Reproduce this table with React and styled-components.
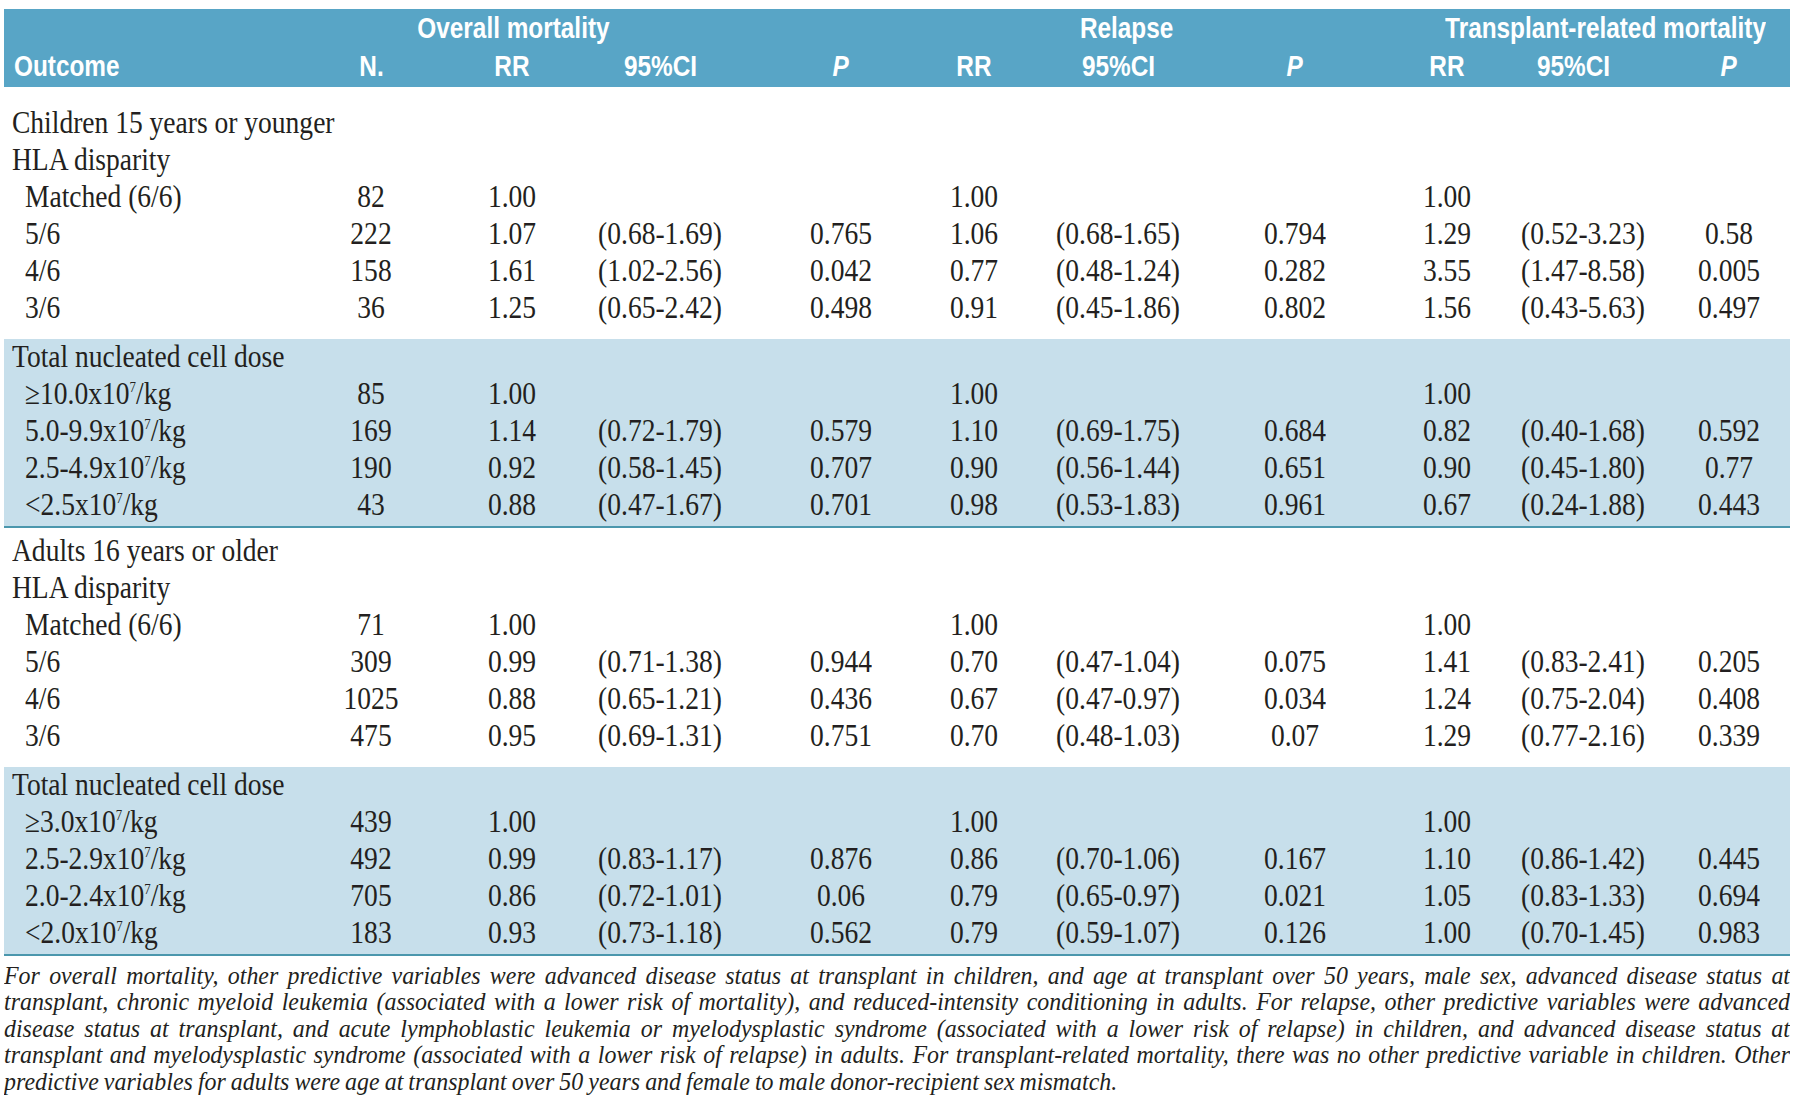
import React from 'react'
import styled, { createGlobalStyle } from 'styled-components'

const GlobalStyle = createGlobalStyle`
  html, body {
    margin: 0;
    padding: 0;
    background: #ffffff;
  }
  body {
    font-family: "Liberation Serif", "Times New Roman", serif;
    color: #231f20;
  }
`;

// track widths follow the midpoints between the column centres of the print layout,
// shift nudges each column's text back onto its printed centre
const COLS = [
    { w: 296.5 },
    { w: 141, shift: 0 },
    { w: 144.5, shift: -2 },
    { w: 164.5, shift: -8 },
    { w: 157, shift: 12 },
    { w: 138.5, shift: -3 },
    { w: 160.5, shift: -8 },
    { w: 164.5, shift: 6 },
    { w: 139.5, shift: 6 },
    { w: 140.5, shift: -7 },
    { w: 139, shift: 8 },
]

const TEMPLATE = COLS.map((c) => `${c.w}px`).join(' ')

const FOOT_SCALE = 0.92

const Page = styled.div`
width: 1786px;
padding: 9px 0 0 4px;
`;

const Header = styled.div`
background-color: #58a5c6;
padding: 0 0 2px;
color: #ffffff;
font-family: "Liberation Sans", Arial, sans-serif;
font-weight: 700;
font-size: 29px;
`;

const HeadRow = styled.div`
display: grid;
grid-template-columns: ${TEMPLATE};
height: 38px;
line-height: 38px;
`;

const GroupTitle = styled.div`
grid-column: ${(p) => p.$col} / span ${(p) => p.$span || 1};
grid-row: 1;
justify-self: ${(p) => (p.$right ? 'end' : 'center')};
padding-right: ${(p) => (p.$right ? '24px' : '0')};
white-space: nowrap;
`;

const HeadLabel = styled.div`
padding-left: 10px;
white-space: nowrap;
`;

const HeadCell = styled.div`
text-align: center;
white-space: nowrap;
font-style: ${(p) => (p.$italic ? 'italic' : 'normal')};
padding-left: ${(p) => Math.max(0, p.$shift * 2)}px;
padding-right: ${(p) => Math.max(0, -p.$shift * 2)}px;
`;

// headings are set in a condensed grotesque: narrow the sans on the x axis
const HeadText = styled.span`
display: inline-block;
transform: scaleX(0.84);
transform-origin: ${(p) => p.$origin || 'center'};
`;

const Section = styled.div`
background-color: ${(p) => (p.$band ? '#c7dfeb' : 'transparent')};
padding: ${(p) => (p.$band ? '0 0 2px' : p.$first ? '18px 0 12px' : '5px 0 12px')};
border-bottom: ${(p) => (p.$band ? '2px solid #4b97ad' : 'none')};
`;

const Row = styled.div`
display: grid;
grid-template-columns: ${TEMPLATE};
height: 37px;
line-height: 34px;
font-size: 32px;
`;

const LabelCell = styled.div`
padding-left: ${(p) => (p.$sub ? '21px' : '8px')};
white-space: nowrap;
`;

const Cell = styled.div`
text-align: center;
white-space: nowrap;
padding-left: ${(p) => Math.max(0, p.$shift * 2)}px;
padding-right: ${(p) => Math.max(0, -p.$shift * 2)}px;
`;

// the print face is a condensed Century, so the serif is narrowed on the x axis
const CenterText = styled.span`
display: inline-block;
transform: scaleX(0.86);
transform-origin: center;
`;

const LeftText = styled(CenterText)`
transform-origin: left center;
`;

const Sup = styled.sup`
font-size: 15px;
line-height: 0;
vertical-align: 0;
position: relative;
top: -12px;
`;

const Footnote = styled.div`
width: 1786px;
overflow: hidden;
padding-top: 7px;
`;

// condensed italic: set wider, then narrowed back onto the table width
const FootText = styled.div`
width: ${1786 / FOOT_SCALE}px;
transform: scaleX(${FOOT_SCALE});
transform-origin: left top;
font-style: italic;
font-size: 26px;
word-spacing: -1px;
line-height: 26.4px;
`;

const FootLine = styled.div`
white-space: nowrap;
text-align: justify;
text-align-last: ${(p) => (p.$last ? 'left' : 'justify')};
`;

const Dose = ({ pre, post = '/kg' }) => (
    <>
        {pre}
        <Sup>7</Sup>
        {post}
    </>
)

const SECTIONS = [
    {
        band: false,
        first: true,
        rows: [
            { label: 'Children 15 years or younger' },
            { label: 'HLA disparity' },
            { label: 'Matched (6/6)', sub: true, v: ['82', '1.00', '', '', '1.00', '', '', '1.00', '', ''] },
            { label: '5/6', sub: true, v: ['222', '1.07', '(0.68-1.69)', '0.765', '1.06', '(0.68-1.65)', '0.794', '1.29', '(0.52-3.23)', '0.58'] },
            { label: '4/6', sub: true, v: ['158', '1.61', '(1.02-2.56)', '0.042', '0.77', '(0.48-1.24)', '0.282', '3.55', '(1.47-8.58)', '0.005'] },
            { label: '3/6', sub: true, v: ['36', '1.25', '(0.65-2.42)', '0.498', '0.91', '(0.45-1.86)', '0.802', '1.56', '(0.43-5.63)', '0.497'] },
        ],
    },
    {
        band: true,
        rows: [
            { label: 'Total nucleated cell dose' },
            { dose: '≥10.0x10', sub: true, v: ['85', '1.00', '', '', '1.00', '', '', '1.00', '', ''] },
            { dose: '5.0-9.9x10', sub: true, v: ['169', '1.14', '(0.72-1.79)', '0.579', '1.10', '(0.69-1.75)', '0.684', '0.82', '(0.40-1.68)', '0.592'] },
            { dose: '2.5-4.9x10', sub: true, v: ['190', '0.92', '(0.58-1.45)', '0.707', '0.90', '(0.56-1.44)', '0.651', '0.90', '(0.45-1.80)', '0.77'] },
            { dose: '<2.5x10', sub: true, v: ['43', '0.88', '(0.47-1.67)', '0.701', '0.98', '(0.53-1.83)', '0.961', '0.67', '(0.24-1.88)', '0.443'] },
        ],
    },
    {
        band: false,
        rows: [
            { label: 'Adults 16 years or older' },
            { label: 'HLA disparity' },
            { label: 'Matched (6/6)', sub: true, v: ['71', '1.00', '', '', '1.00', '', '', '1.00', '', ''] },
            { label: '5/6', sub: true, v: ['309', '0.99', '(0.71-1.38)', '0.944', '0.70', '(0.47-1.04)', '0.075', '1.41', '(0.83-2.41)', '0.205'] },
            { label: '4/6', sub: true, v: ['1025', '0.88', '(0.65-1.21)', '0.436', '0.67', '(0.47-0.97)', '0.034', '1.24', '(0.75-2.04)', '0.408'] },
            { label: '3/6', sub: true, v: ['475', '0.95', '(0.69-1.31)', '0.751', '0.70', '(0.48-1.03)', '0.07', '1.29', '(0.77-2.16)', '0.339'] },
        ],
    },
    {
        band: true,
        rows: [
            { label: 'Total nucleated cell dose' },
            { dose: '≥3.0x10', sub: true, v: ['439', '1.00', '', '', '1.00', '', '', '1.00', '', ''] },
            { dose: '2.5-2.9x10', sub: true, v: ['492', '0.99', '(0.83-1.17)', '0.876', '0.86', '(0.70-1.06)', '0.167', '1.10', '(0.86-1.42)', '0.445'] },
            { dose: '2.0-2.4x10', sub: true, v: ['705', '0.86', '(0.72-1.01)', '0.06', '0.79', '(0.65-0.97)', '0.021', '1.05', '(0.83-1.33)', '0.694'] },
            { dose: '<2.0x10', sub: true, v: ['183', '0.93', '(0.73-1.18)', '0.562', '0.79', '(0.59-1.07)', '0.126', '1.00', '(0.70-1.45)', '0.983'] },
        ],
    },
]

const SUBHEADS = ['N.', 'RR', '95%CI', 'P', 'RR', '95%CI', 'P', 'RR', '95%CI', 'P']

const FOOTNOTE = [
    'For overall mortality, other predictive variables were advanced disease status at transplant in children, and age at transplant over 50 years, male sex, advanced disease status at',
    'transplant, chronic myeloid leukemia (associated with a lower risk of mortality), and reduced-intensity conditioning in adults. For relapse, other predictive variables were advanced',
    'disease status at transplant, and acute lymphoblastic leukemia or myelodysplastic syndrome (associated with a lower risk of relapse) in children, and advanced disease status at',
    'transplant and myelodysplastic syndrome (associated with a lower risk of relapse) in adults. For transplant-related mortality, there was no other predictive variable in children. Other',
    'predictive variables for adults were age at transplant over 50 years and female to male donor-recipient sex mismatch.',
]

const App = () => {
    return (
        <>
            <GlobalStyle />
            <Page>
                <Header>
                    <HeadRow>
                        <GroupTitle $col={3}><HeadText>Overall mortality</HeadText></GroupTitle>
                        <GroupTitle $col={7}><HeadText>Relapse</HeadText></GroupTitle>
                        <GroupTitle $col={9} $span={3} $right>
                            <HeadText $origin="right center">Transplant-related mortality</HeadText>
                        </GroupTitle>
                    </HeadRow>
                    <HeadRow>
                        <HeadLabel><HeadText $origin="left center">Outcome</HeadText></HeadLabel>
                        {SUBHEADS.map((h, i) => (
                            <HeadCell key={i} $shift={COLS[i + 1].shift} $italic={h === 'P'}>
                                <HeadText>{h}</HeadText>
                            </HeadCell>
                        ))}
                    </HeadRow>
                </Header>

                {SECTIONS.map((section, si) => (
                    <Section key={si} $band={section.band} $first={section.first}>
                        {section.rows.map((row, ri) => (
                            <Row key={ri}>
                                <LabelCell $sub={row.sub}>
                                    <LeftText>{row.dose ? <Dose pre={row.dose} /> : row.label}</LeftText>
                                </LabelCell>
                                {(row.v || []).map((val, vi) => (
                                    <Cell key={vi} $shift={COLS[vi + 1].shift}>
                                        {val && <CenterText>{val}</CenterText>}
                                    </Cell>
                                ))}
                            </Row>
                        ))}
                    </Section>
                ))}

                <Footnote>
                    <FootText>
                        {FOOTNOTE.map((line, i) => (
                            <FootLine key={i} $last={i === FOOTNOTE.length - 1}>
                                {line}
                            </FootLine>
                        ))}
                    </FootText>
                </Footnote>
            </Page>
        </>
    )
}

export default App;
